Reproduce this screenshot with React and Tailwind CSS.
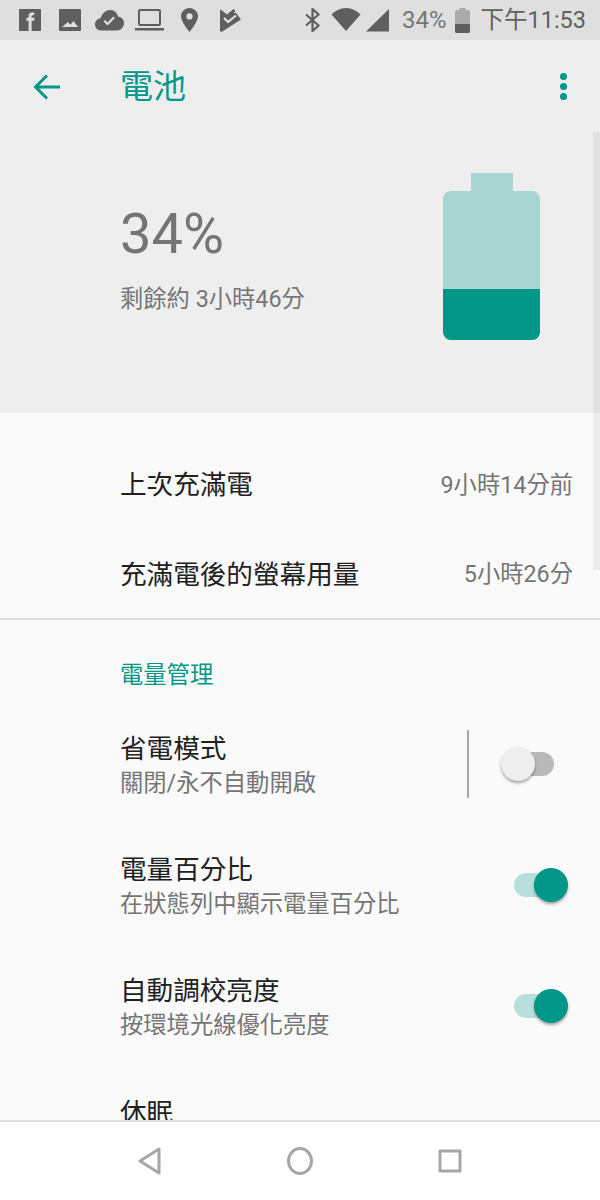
// App.jsx
import React from "react";

const font = { fontFamily: "Roboto, 'Noto Sans CJK TC', sans-serif" };

function StatusIcons() {
  return (
    <div className="flex items-center gap-[8px]">
      {/* facebook */}
      <svg width="22" height="22" viewBox="0 0 22 22">
        <path fill="#5f5f5f" fillRule="evenodd" d="M0 0h22v22H0z M15.5 3.500h-2.600c-2 0-3.300 1.300-3.300 3.400v1.900H7.400v2.900h2.200V22h3V11.700h2.600l.4-2.900h-3V7.200c0-.8.3-1 1-1h1.400z" />
      </svg>
      {/* picture */}
      <svg className="ml-[10px]" width="22" height="22" viewBox="0 0 22 22">
        <path fill="#5f5f5f" fillRule="evenodd" d="M1 0h20a1 1 0 0 1 1 1v20a1 1 0 0 1-1 1H1a1 1 0 0 1-1-1V1a1 1 0 0 1 1-1z M3 18h16l-4.500-6-3.200 3.800L9 13z" />
      </svg>
      {/* cloud check */}
      <svg className="ml-[6px]" width="29" height="21" viewBox="0 0 29 21">
        <path fill="#5f5f5f" fillRule="evenodd" d="M15 0c4 0 7.200 2.800 8 6.500 3.300.4 6 3 6 6.800 0 4-3.200 7.200-7 7.200H6c-3.500 0-6-2.700-6-6.200 0-3.200 2.400-5.800 5.500-6.100C7.200 3.300 10.800 0 15 0z M12.500 15.500l7.500-7.500-1.600-1.500-5.900 5.900-2.400-2.400L8.500 11.500z" />
      </svg>
      {/* laptop */}
      <svg className="ml-[3px]" width="29" height="22" viewBox="0 0 29 22">
        <rect x="4" y="1" width="21" height="15" rx="1" fill="none" stroke="#5f5f5f" strokeWidth="2" />
        <rect x="0" y="19" width="29" height="2.500" fill="#5f5f5f" />
      </svg>
      {/* pin */}
      <svg className="ml-[9px]" width="17" height="24" viewBox="0 0 17 24">
        <path fill="#5f5f5f" fillRule="evenodd" d="M8.500 0C13.200 0 17 3.700 17 8.300 17 14 8.500 24 8.500 24S0 14 0 8.300C0 3.700 3.800 0 8.500 0z M8.500 5.300a3.100 3.100 0 1 0 0 6.200 3.100 3.100 0 0 0 0-6.200z" />
      </svg>
      {/* check flag */}
      <svg className="ml-[14px]" width="21" height="23" viewBox="0 0 21 23">
        <path fill="#5f5f5f" d="M0 1.500 1 .8 7 5.500 13.500 0 15.500 2 13.500 4H16L21 10.500 1.500 23 0 22z" />
        <path fill="none" stroke="#dfdfdf" strokeWidth="2.200" d="M4 9l4 4 8-6.500" />
      </svg>
    </div>
  );
}

function Toggle({ on }) {
  return (
    <div className="relative w-[67px] h-[34px] mb-[2px] flex items-center">
      <div
        className={`absolute right-[14px] w-[40px] h-[24px] rounded-full ${
          on ? "bg-[#b7e0dc]" : "bg-[#b9b9b9]"
        }`}
      />
      <div
        className={`absolute w-[34px] h-[34px] rounded-full shadow-[0_2px_3px_rgba(0,0,0,0.35)] ${
          on ? "bg-[#009688] right-0" : "bg-[#eeeeee] right-[33px]"
        }`}
      />
    </div>
  );
}

function SwitchRow({ title, sub, on, divider }) {
  return (
    <div className="h-[121px] flex items-center pl-[120px] pr-[32px]">
      <div className="flex-1">
        <div className="text-[26.6px] leading-[36px] text-[#212121]">{title}</div>
        <div className="text-[23.3px] leading-[32px] text-[#757575]">{sub}</div>
      </div>
      {divider && <div className="w-[2px] h-[68px] mb-[2px] bg-[#a6a6a6] mr-[32px]" />}
      <Toggle on={on} />
    </div>
  );
}

export default function App() {
  return (
    <div
      className="w-[600px] h-[1200px] flex flex-col overflow-hidden bg-white relative"
      style={font}
    >
      {/* status bar */}
      <div className="h-[40px] bg-[#dfdfdf] flex items-center justify-between pl-[19px] pr-[14px] shrink-0">
        <StatusIcons />
        <div className="flex items-center">
          <svg width="17" height="24" viewBox="0 0 17 24">
            <path fill="none" stroke="#5f5f5f" strokeWidth="2.200" d="M2 6.500l12.500 11-6 5.500V1l6 5.500L2 17.500" />
          </svg>
          <svg className="ml-[10px]" width="30" height="24" viewBox="0 0 30 24">
            <path fill="#5f5f5f" d="M15 23L.5 6.500C4 3 9 0 15 0s11 3 14.500 6.500z" />
          </svg>
          <svg className="ml-[5px]" width="23" height="23" viewBox="0 0 23 23">
            <path fill="#5f5f5f" d="M23 0v22.500H0z" />
          </svg>
          <span className="ml-[13px] text-[24px] leading-[40px] text-[#757575]">34%</span>
          <svg className="ml-[9px]" width="15" height="25" viewBox="0 0 15 25">
            <path fill="#ababab" d="M4.500 0h6v2h3a1.500 1.500 0 0 1 1.500 1.500V16H0V3.500A1.500 1.500 0 0 1 1.500 2h3z" />
            <path fill="#5f5f5f" d="M0 16h15v7.500A1.500 1.500 0 0 1 13.500 25h-12A1.500 1.500 0 0 1 0 23.500z" />
          </svg>
          <span className="ml-[10px] text-[23.5px] leading-[40px] text-[#5f5f5f]">下午11:53</span>
        </div>
      </div>

      {/* hero */}
      <div className="h-[373px] bg-[#eeeeee] shrink-0 flex flex-col">
        <div className="h-[92px] flex items-center pl-[33px] pr-[33px] pt-[1px]">
          <svg width="27" height="26" viewBox="0 0 27 26">
            <path fill="none" stroke="#009688" strokeWidth="3" d="M27 13H3M14 1.500L2.500 13 14 24.500" />
          </svg>
          <div className="ml-[60px] flex-1 text-[33px] leading-[40px] text-[#009688]">電池</div>
          <div className="flex flex-col gap-[3px]">
            <div className="w-[7px] h-[7px] rounded-full bg-[#009688]" />
            <div className="w-[7px] h-[7px] rounded-full bg-[#009688]" />
            <div className="w-[7px] h-[7px] rounded-full bg-[#009688]" />
          </div>
        </div>
        <div className="flex pl-[120px] pr-[60px] pt-[41px] justify-between">
          <div className="pt-[28px]">
            <div className="text-[56px] leading-[66px] text-[#757575]">34%</div>
            <div className="mt-[17px] text-[23.3px] leading-[30px] text-[#757575]">剩餘約 3小時46分</div>
          </div>
          <div className="flex flex-col items-center w-[97px]">
            <div className="w-[42px] h-[18px] bg-[#a8d5d1]" />
            <div className="w-[97px] h-[149px] rounded-[8px] overflow-hidden flex flex-col">
              <div className="h-[98px] bg-[#a8d5d1]" />
              <div className="flex-1 bg-[#009688]" />
            </div>
          </div>
        </div>
      </div>

      {/* list */}
      <div className="flex-1 bg-[#fafafa] overflow-hidden">
        <div className="h-[207px] border-b-2 border-[#dedede] pt-[27px] pl-[120px] pr-[27px]">
          <div className="h-[90px] flex items-center justify-between">
            <span className="text-[26.6px] text-[#212121]">上次充滿電</span>
            <span className="text-[23.3px] text-[#757575]">9小時14分前</span>
          </div>
          <div className="h-[89px] flex items-center justify-between">
            <span className="text-[26.6px] text-[#212121]">充滿電後的螢幕用量</span>
            <span className="text-[23.3px] text-[#757575]">5小時26分</span>
          </div>
        </div>
        <div className="pl-[120px] pt-[40px] h-[84px] text-[23.3px] leading-[30px] text-[#009688]">電量管理</div>
        <SwitchRow title="省電模式" sub="關閉/永不自動開啟" divider on={false} />
        <SwitchRow title="電量百分比" sub="在狀態列中顯示電量百分比" on />
        <SwitchRow title="自動調校亮度" sub="按環境光線優化亮度" on />
        <div className="pl-[120px] pt-[28px] text-[26.6px] leading-[36px] text-[#212121]">休眠</div>
      </div>

      {/* nav bar */}
      <div className="h-[80px] bg-white border-t-2 border-[#dedede] flex items-center justify-center gap-[125px] shrink-0">
        <svg width="24" height="28" viewBox="0 0 24 28">
          <path fill="none" stroke="#a6a6a6" strokeWidth="3" strokeLinejoin="round" d="M21 2v24L2 14z" />
        </svg>
        <svg width="26" height="28" viewBox="0 0 26 28">
          <ellipse cx="13" cy="14" rx="11.500" ry="12.500" fill="none" stroke="#a6a6a6" strokeWidth="3" />
        </svg>
        <svg width="24" height="24" viewBox="0 0 24 24">
          <rect x="2" y="2" width="20" height="20" fill="none" stroke="#a6a6a6" strokeWidth="3" strokeLinejoin="round" />
        </svg>
      </div>

      {/* scrollbar */}
      <div className="absolute right-0 top-[132px] w-[7px] h-[438px] bg-black/5" />
    </div>
  );
}
